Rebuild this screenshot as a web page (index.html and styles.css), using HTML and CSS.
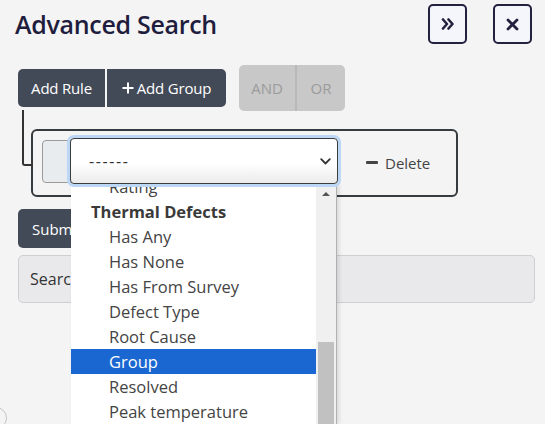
FILE: index.html
```html
<!DOCTYPE html>
<html>
<head>
<meta charset="utf-8">
<title>Advanced Search</title>
<link rel="stylesheet" href="styles.css">
</head>
<body>
<div class="panel">
  <header class="top">
    <h1 class="title">Advanced Search</h1>
    <div class="top-actions">
      <button class="icon-btn" aria-label="Collapse">
        <svg width="14" height="12" viewBox="0 0 14 12"><path d="M2 1.5 L6 6 L2 10.5 M7.5 1.5 L11.5 6 L7.5 10.5" fill="none" stroke="#24213f" stroke-width="2.6" stroke-linecap="round" stroke-linejoin="round"/></svg>
      </button>
      <button class="icon-btn" aria-label="Close">
        <svg width="13" height="13" viewBox="0 0 13 13"><path d="M2 2 L11 11 M11 2 L2 11" fill="none" stroke="#24213f" stroke-width="2.8" stroke-linecap="round"/></svg>
      </button>
    </div>
  </header>

  <div class="qb">
    <div class="group-head">
      <div class="btn-group">
        <button class="btn btn-first">Add Rule</button>
        <button class="btn btn-last"><svg class="plus" width="12" height="12" viewBox="0 0 12 12"><path d="M6 0.5 V11.5 M0.5 6 H11.5" stroke="#fff" stroke-width="2"/></svg>Add Group</button>
      </div>
      <div class="cond">
        <span class="cond-btn cond-and">AND</span>
        <span class="cond-btn cond-or">OR</span>
      </div>
    </div>

    <div class="rules">
      <div class="rule">
        <span class="handle"></span>
        <div class="select">
          <span class="dashes">------</span>
          <svg width="11" height="7" viewBox="0 0 11 7"><path d="M1.2 1.2 L5.5 5.5 L9.8 1.2" fill="none" stroke="#333" stroke-width="1.8" stroke-linecap="round" stroke-linejoin="round"/></svg>
        </div>
        <button class="del"><span class="minus"></span>Delete</button>
      </div>
    </div>

    <button class="btn submit">Submit</button>
    <div class="search">Search</div>
  </div>

  <div class="dropdown">
    <ul class="list">
      <li class="opt">Rating</li>
      <li class="grp">Thermal Defects</li>
      <li class="opt">Has Any</li>
      <li class="opt">Has None</li>
      <li class="opt">Has From Survey</li>
      <li class="opt">Defect Type</li>
      <li class="opt">Root Cause</li>
      <li class="opt sel">Group</li>
      <li class="opt">Resolved</li>
      <li class="opt">Peak temperature</li>
    </ul>
    <div class="scrollbar">
      <span class="arrow-up"></span>
      <span class="thumb"></span>
    </div>
  </div>

  <span class="corner-circle"></span>
</div>
</body>
</html>
```

FILE: styles.css
```css
* { box-sizing: border-box; }

html, body {
  margin: 0;
  padding: 0;
}

body {
  background: #f4f4f4;
  font-family: "Open Sans", "Noto Sans", "Liberation Sans", sans-serif;
  color: #333;
  width: 545px;
  height: 424px;
  overflow: hidden;
}

.panel {
  position: relative;
  width: 545px;
  height: 424px;
  overflow: hidden;
}

/* header */
.top {
  display: flex;
  justify-content: space-between;
  align-items: center;
  height: 44px;
  padding: 4px 13px 0 15px;
}

.title {
  margin: 0;
  font-size: 25px;
  font-weight: 600;
  color: #1f1d3d;
  letter-spacing: -0.3px;
}

.top-actions {
  display: flex;
  gap: 26px;
}

.icon-btn {
  width: 39px;
  height: 40px;
  padding: 0;
  border: 2px solid #24213f;
  border-radius: 5px;
  background: #f5f6fb;
  display: grid;
  place-items: center;
}

/* query builder */
.qb {
  padding: 21px 0 0 18px;
}

.group-head {
  display: flex;
  align-items: center;
  gap: 13px;
  height: 46px;
}

.btn-group {
  display: flex;
  gap: 2px;
}

.btn {
  height: 38px;
  border: 0;
  background: #434a57;
  color: #fff;
  font-family: inherit;
  font-size: 15px;
  display: flex;
  align-items: center;
  padding: 0 13px;
  white-space: nowrap;
}

.btn-first {
  width: 87px;
  padding: 0;
  border-radius: 5px 0 0 5px;
  justify-content: center;
  letter-spacing: -0.2px;
}

.btn-last {
  width: 119px;
  padding: 0;
  border-radius: 0 5px 5px 0;
  justify-content: center;
  gap: 3px;
  letter-spacing: -0.2px;
}

.cond {
  display: flex;
  height: 46px;
  background: #c8c8c8;
  border-radius: 5px;
}

.cond-btn {
  display: flex;
  align-items: center;
  justify-content: center;
  color: #9b9b9b;
  font-size: 15px;
}

.cond-and {
  width: 58px;
  border-right: 2px solid #b9b9b9;
}

.cond-or {
  width: 48px;
}

.rules {
  padding: 18px 0 0 13px;
}

.rule {
  position: relative;
  width: 427px;
  height: 68px;
  border: 2px solid #353b3f;
  border-radius: 6px;
  display: flex;
  align-items: center;
  padding-left: 9px;
}

.rule::before {
  content: "";
  position: absolute;
  left: -11px;
  top: -21px;
  width: 9px;
  height: 54px;
  border-left: 2px solid #333;
  border-bottom: 2px solid #333;
  border-bottom-left-radius: 3px;
}

.handle {
  width: 30px;
  height: 43px;
  margin-top: -3px;
  background: #e9ecef;
  border: 1px solid #9a9a9a;
  border-radius: 4px 0 0 4px;
}

.select {
  position: relative;
  z-index: 2;
  margin-left: -2px;
  margin-top: -4px;
  width: 268px;
  height: 46px;
  border: 1px solid #3c3c3c;
  border-radius: 4px;
  box-shadow: 0 0 0 3px #bcd7f6;
  background: linear-gradient(#ffffff 55%, #ebebeb);
  display: flex;
  align-items: center;
  justify-content: space-between;
  padding: 0 6px 0 18px;
  font-size: 16px;
  color: #333;
}

.dashes {
  letter-spacing: 1.6px;
}

.del {
  margin-left: 28px;
  margin-top: -1px;
  background: none;
  border: 0;
  padding: 0;
  font-family: inherit;
  font-size: 15px;
  color: #444;
  display: flex;
  align-items: center;
  gap: 7px;
}

.minus {
  width: 12px;
  height: 3px;
  background: #444;
  border-radius: 1px;
}

.submit {
  margin-top: 12px;
  height: 39px;
  width: 76px;
  border-radius: 5px;
  padding: 0 14px;
}

.search {
  margin-top: 7px;
  width: 517px;
  height: 48px;
  background: #e9e9eb;
  border: 1px solid #cfcfcf;
  border-radius: 5px;
  padding-left: 11px;
  display: flex;
  align-items: center;
  font-size: 16px;
  color: #333;
}

/* open select dropdown */
.dropdown {
  position: absolute;
  left: 71px;
  top: 184px;
  width: 266px;
  height: 240px;
  background: #fff;
  overflow: hidden;
  border-right: 1px solid #b0b0b0;
  box-shadow: 2px 0 4px rgba(0, 0, 0, 0.12);
}

.list {
  list-style: none;
  margin: -10px 0 0 0;
  padding: 0;
  width: 245px;
}

.list li {
  height: 25px;
  line-height: 25px;
  font-size: 16.5px;
  white-space: nowrap;
}

.opt {
  padding-left: 38px;
  color: #444;
}

.grp {
  padding-left: 20px;
  font-weight: 700;
  color: #3a3a3a;
}

.sel {
  background: #1a67d2;
  color: #fff;
}

.scrollbar {
  position: absolute;
  right: 0;
  top: 0;
  bottom: 0;
  width: 20px;
  background: #f0f0f0;
}

.arrow-up {
  position: absolute;
  left: 6px;
  top: 8px;
  width: 0;
  height: 0;
  border-left: 4px solid transparent;
  border-right: 4px solid transparent;
  border-bottom: 4px solid #555;
}

.thumb {
  position: absolute;
  left: 2px;
  right: 2px;
  top: 158px;
  bottom: 0;
  background: #c1c1c1;
}

.corner-circle {
  position: absolute;
  left: -15px;
  top: 407px;
  width: 22px;
  height: 22px;
  border: 1px solid #c4c4c4;
  border-radius: 50%;
}
```
